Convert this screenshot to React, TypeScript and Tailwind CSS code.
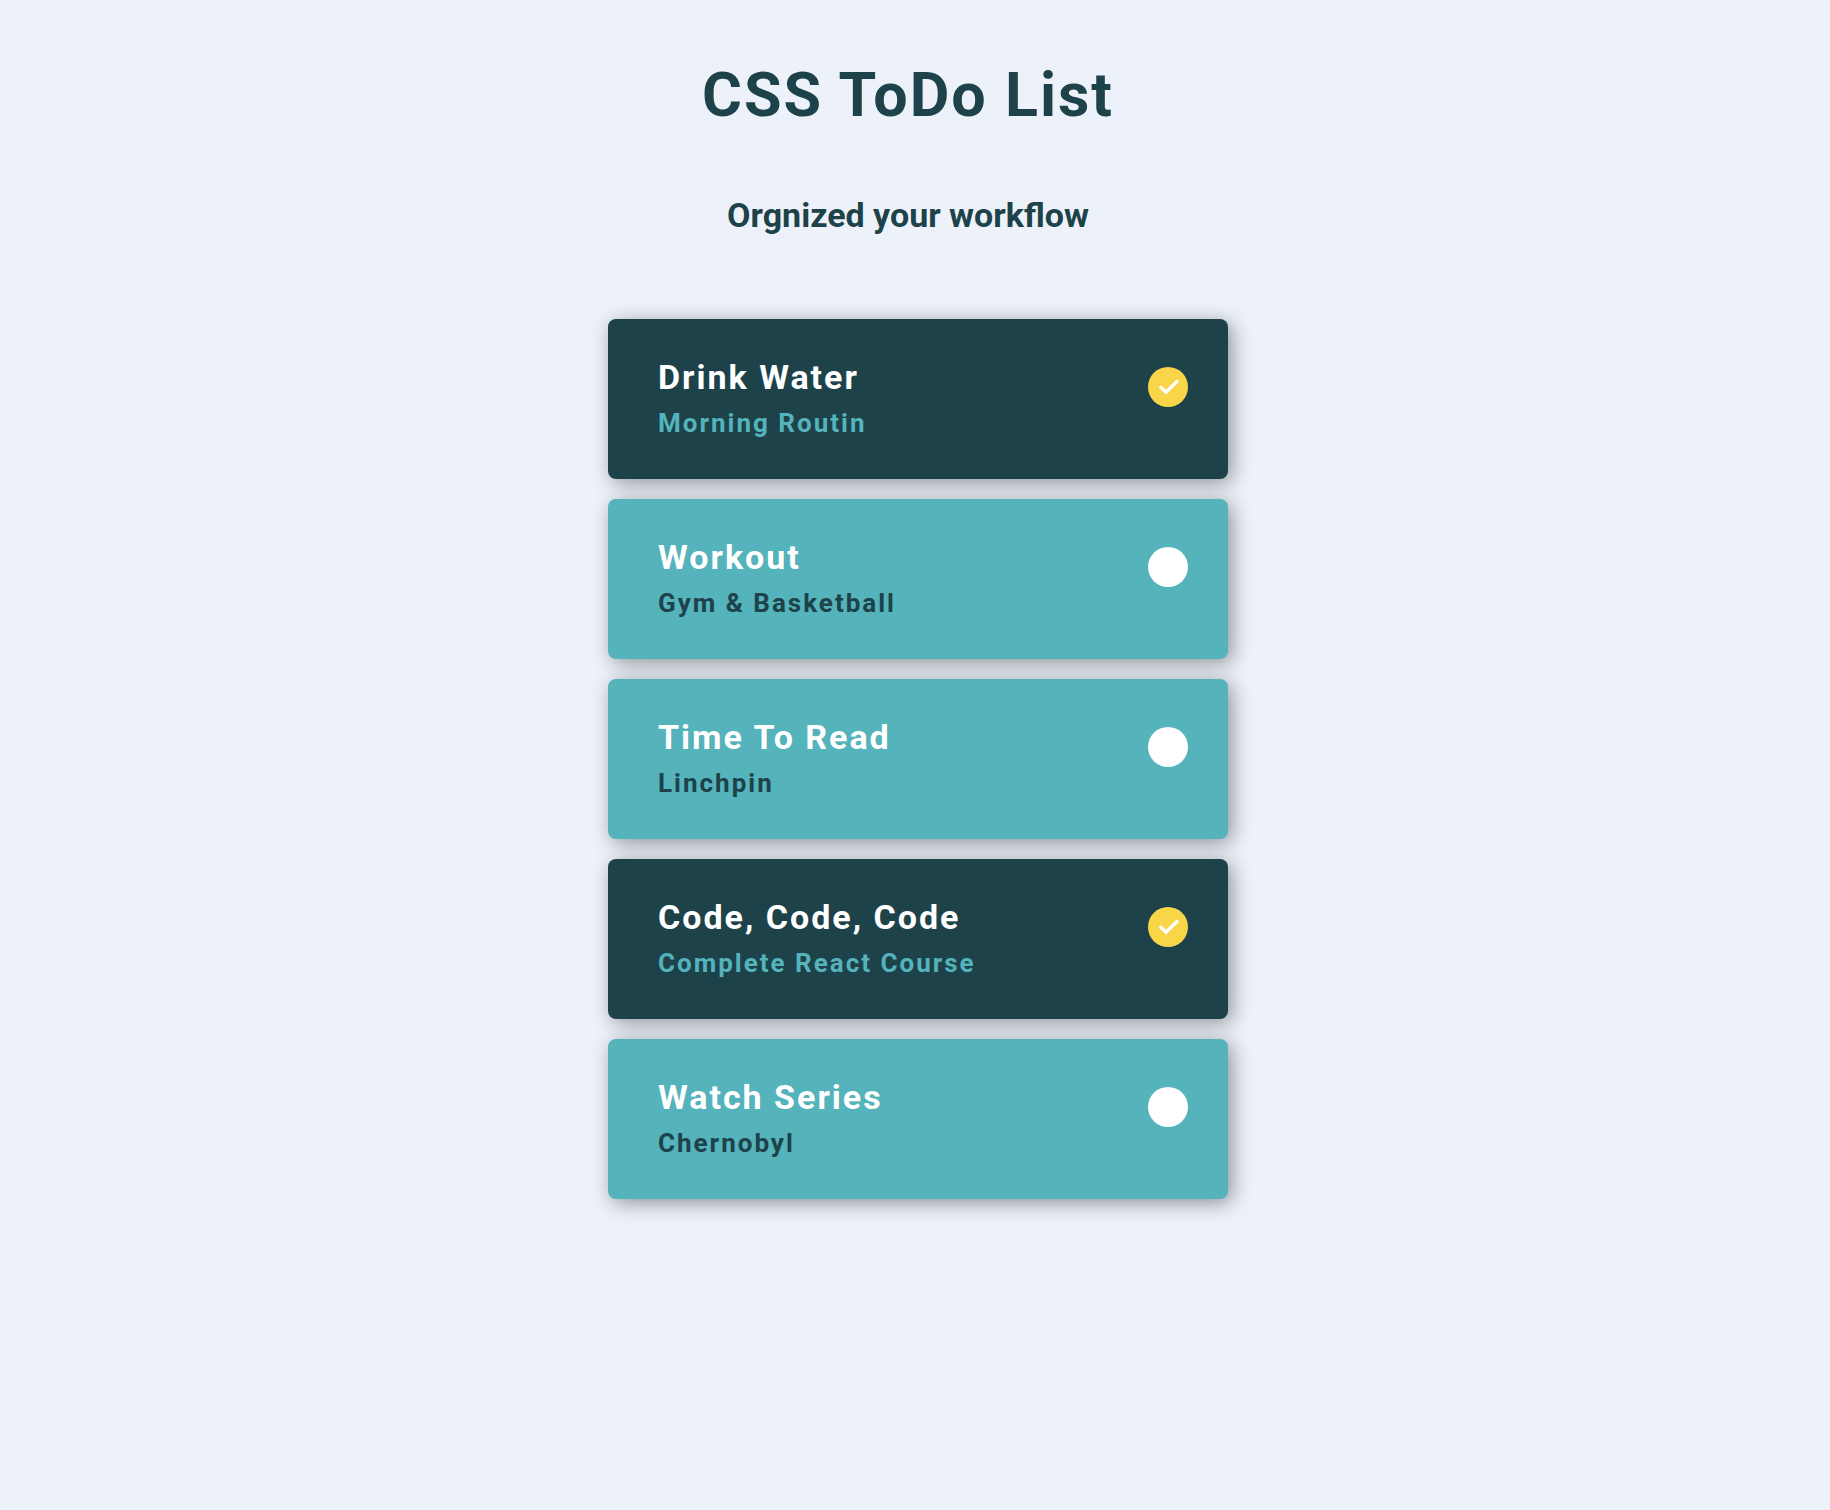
const tasks = [
  { title: "Drink Water", note: "Morning Routin", done: true },
  { title: "Workout", note: "Gym & Basketball", done: false },
  { title: "Time To Read", note: "Linchpin", done: false },
  { title: "Code, Code, Code", note: "Complete React Course", done: true },
  { title: "Watch Series", note: "Chernobyl", done: false },
];

function Task({ title, note, done }: { title: string; note: string; done: boolean }) {
  return (
    <li>
      <label className="group flex h-40 cursor-pointer items-start justify-between rounded-lg bg-[#54b3bb] pt-9 pr-10 pl-[50px] shadow-[4px_4px_20px_rgba(0,0,0,0.4)] has-checked:bg-[#1d4249]">
        <span className="flex flex-col gap-1 font-bold">
          <span className="text-[34px] leading-[44px] tracking-[2px] text-white">{title}</span>
          <span className="text-[26px] leading-[40px] tracking-[2px] text-[#1d4249] group-has-checked:text-[#54b3bb]">{note}</span>
        </span>
        <span className="mt-3 grid size-10 shrink-0">
          <input type="checkbox" defaultChecked={done} className="peer col-start-1 row-start-1 size-10 cursor-pointer appearance-none rounded-full bg-white checked:bg-[#f9d548]" />
          <svg viewBox="0 0 40 40" aria-hidden="true" className="pointer-events-none col-start-1 row-start-1 hidden size-10 fill-none stroke-white peer-checked:block">
            <path d="M12.8 20.2L18 25.2L29 14.5" strokeWidth="3.4" strokeLinecap="round" strokeLinejoin="miter" />
          </svg>
        </span>
      </label>
    </li>
  );
}

export default function App() {
  return (
    <main className="flex min-h-screen flex-col items-center bg-[#edf2fa] pt-14 pr-[14px] font-[Roboto,sans-serif] text-[#1d4249]">
      <h1 className="text-center text-[61px] leading-[78px] font-bold tracking-[2px]">CSS ToDo List</h1>
      <h2 className="mt-[62px] text-center text-[34px] leading-[38px] font-bold">Orgnized your workflow</h2>
      <div className="mt-[85px] w-full max-w-[640px] pl-5">
        <ul className="flex flex-col gap-5">
          {tasks.map((task) => (
            <Task key={task.title} {...task} />
          ))}
        </ul>
      </div>
    </main>
  );
}
